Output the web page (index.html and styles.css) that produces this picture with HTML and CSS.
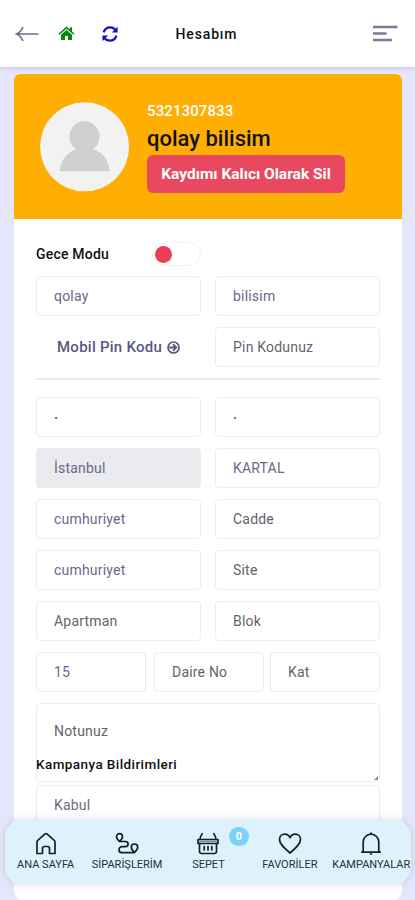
FILE: index.html
```html
<!DOCTYPE html>
<html lang="tr">
<head>
<meta charset="utf-8">
<title>Hesabım</title>
<link rel="stylesheet" href="styles.css">
</head>
<body>
<header class="topbar">
  <div class="tools">
    <svg class="back" width="24" height="16" viewBox="0 0 24 16"><path d="M8 1Q6 6 1.5 8Q6 10 8 15M2 8H23.5" fill="none" stroke="#6f6c8b" stroke-width="1.6"/></svg>
    <svg class="home" width="17" height="15" viewBox="0 0 17 15"><path fill="#0a850d" d="M8.5 .6 11.8 3.5V1.2H14V5.5L16.6 7.7 15.6 8.8 8.5 2.7 1.4 8.8 .4 7.7ZM8.5 4 14 8.7V13.4Q14 14 13.4 14H10V10H7V14H3.6Q3 14 3 13.4V8.7Z"/></svg>
    <svg class="sync" width="16" height="16" viewBox="0 0 16 16"><path d="M1.6 6.4C2.8 2.7 5.4 1.3 8.3 1.3 10.2 1.3 11.8 2 13.2 3.4M14.4 9.6C13.2 13.3 10.6 14.7 7.7 14.7 5.8 14.7 4.2 14 2.8 12.6" fill="none" stroke="#1212c4" stroke-width="2.2"/><path d="M15.6 .8V6.5H9.9ZM.4 15.2V9.5H6.1Z" fill="#1212c4"/></svg>
  </div>
  <h1 class="title">Hesabım</h1>
  <svg class="menu" width="25" height="17" viewBox="0 0 25 17"><path d="M0 2H24.5M0 8.5H13.5M0 15H19" stroke="#7d7a97" stroke-width="2.4"/></svg>
</header>
<main class="card">
  <section class="profile">
    <svg class="avatar" width="90" height="90" viewBox="0 0 90 90"><circle cx="44.6" cy="44.8" r="44.5" fill="#f2f2f2"/><path d="M20 69.3C20.5 58 27 50 37 47V42H52.5V47C63 50 69 58 69.5 69.3Z" fill="#ced0d1"/><ellipse cx="44.5" cy="34.5" rx="15" ry="15.2" fill="#ced0d1"/></svg>
    <div class="who">
      <div class="phone">5321307833</div>
      <h2 class="name">qolay bilisim</h2>
      <button class="delete">Kaydımı Kalıcı Olarak Sil</button>
    </div>
  </section>
  <section class="form">
    <div class="mode"><span>Gece Modu</span><i class="switch"></i></div>
    <div class="row"><div class="field">qolay</div><div class="field">bilisim</div></div>
    <div class="row">
      <div class="pin"><span>Mobil Pin Kodu</span><svg width="13" height="13" viewBox="0 0 13 13"><path d="M6.5 1A5.5 5.5 0 1 1 6.5 12A5.5 5.5 0 1 1 6.5 1Z" fill="none" stroke="#5a577f" stroke-width="1.7"/><path d="M2 6.5H9M6 3.2 9.3 6.5 6 9.8" fill="none" stroke="#5a577f" stroke-width="1.8"/></svg></div>
      <div class="field hint">Pin Kodunuz</div>
    </div>
    <hr>
    <div class="row"><div class="field dot">.</div><div class="field dot">.</div></div>
    <div class="row"><div class="field locked">İstanbul</div><div class="field">KARTAL</div></div>
    <div class="row"><div class="field">cumhuriyet</div><div class="field hint">Cadde</div></div>
    <div class="row"><div class="field">cumhuriyet</div><div class="field hint">Site</div></div>
    <div class="row"><div class="field hint">Apartman</div><div class="field hint">Blok</div></div>
    <div class="row thirds"><div class="field">15</div><div class="field hint">Daire No</div><div class="field hint">Kat</div></div>
    <div class="notes"><span class="hint">Notunuz</span><strong>Kampanya Bildirimleri</strong><i class="grip"></i></div>
    <div class="field consent">Kabul</div>
  </section>
</main>
<nav class="dock">
  <a class="item"><svg width="22" height="24" viewBox="0 0 22 24"><path d="M2 10Q2 9 3 8.2L9.8 2.2Q11 1.2 12.2 2.2L19 8.2Q20 9 20 10V21.5H14.5V16.5Q14.5 14.5 12.5 14.5H9.5Q7.5 14.5 7.5 16.5V21.5H2Z"/></svg><span>ANA SAYFA</span></a>
  <a class="item"><svg width="24" height="24" viewBox="0 0 24 24"><path d="M4.5 9.5C2.5 7.5 1.5 6.2 1.5 4.7A3 3 0 0 1 7.5 4.7C7.5 6.2 6.5 7.5 4.5 9.5ZM19.5 20.5C17.3 18.3 16.3 17 16.3 15.2A3.2 3.2 0 0 1 22.7 15.2C22.7 17 21.7 18.3 19.5 20.5ZM4.5 9.5H10.5A2.6 2.6 0 0 1 10.5 14.7H7A3 3 0 0 0 7 20.7H19.5"/></svg><span>SİPARİŞLERİM</span></a>
  <a class="item"><svg width="24" height="24" viewBox="0 0 24 24"><path d="M2 7.5H22V11.5H2ZM3.5 11.5V19.5Q3.7 21.5 5.7 21.5H18.3Q20.3 21.5 20.5 19.5V11.5M4 7.5Q4.2 4 6.2 1.7M20 7.5Q19.8 4 17.8 1.7M8.2 14.5V18M12 14.5V18M15.8 14.5V18"/><path class="rim" d="M3 9.5H21"/></svg><span>SEPET</span><b class="badge">0</b></a>
  <a class="item"><svg width="24" height="24" viewBox="0 0 24 24"><path d="M12 21C5 15 1.5 11.5 1.5 7.5 1.5 4.3 3.8 2.2 6.7 2.2 9 2.2 11 3.5 12 5.7 13 3.5 15 2.2 17.3 2.2 20.2 2.2 22.5 4.3 22.5 7.5 22.5 11.5 19 15 12 21Z"/></svg><span>FAVORİLER</span></a>
  <a class="item"><svg width="22" height="24" viewBox="0 0 22 24"><path d="M3.2 20V10A7.8 7.8 0 0 1 18.8 10V20M1.8 20.2H20.2M10.5 22H11.5M11 1V2.2"/></svg><span>KAMPANYALAR</span></a>
</nav>
</body>
</html>
```
FILE: styles.css
```css
* { box-sizing: border-box; }
body { margin: 0; height: 900px; overflow: hidden; background: #e5e6fb; font-family: Roboto, "Liberation Sans", sans-serif; color: #111; }
.topbar { position: relative; height: 67px; padding: 0 17px 0 15px; display: grid; grid-template-columns: 1fr auto 1fr; align-items: center; background: #fff; box-shadow: 0 1px 4px rgba(90, 90, 140, .25); }
.tools { display: flex; align-items: center; }
.home { margin-left: 19px; }
.sync { margin-left: 27px; }
.title { margin: 0; font-size: 14px; font-weight: 500; letter-spacing: .85px; }
.menu { justify-self: end; }
.card { width: 388px; height: 828px; margin: 7px 0 0 14px; border-radius: 6px 6px 12px 12px; background: #fff; overflow: hidden; }
.profile { display: flex; height: 145px; padding: 28px 26px; background: #ffae03; }
.avatar { flex: none; }
.who { margin-left: 17px; }
.phone { color: #fff; font-size: 15px; line-height: 19px; font-weight: 500; letter-spacing: .1px; }
.name { margin: 4px 0 2px; font-size: 22px; line-height: 28px; font-weight: 500; letter-spacing: 0; }
.delete { display: block; width: 198px; height: 38px; padding: 0; border: 0; border-radius: 6px; background: #e9495f; color: #fff; font: 700 15.5px Roboto, sans-serif; white-space: nowrap; }
.form { padding: 22px 22px 0; }
.mode { display: flex; align-items: center; justify-content: space-between; width: 165px; height: 25px; margin-bottom: 10px; font-size: 14px; font-weight: 500; letter-spacing: .2px; }
.switch { width: 49px; height: 24px; padding: 3px 2px; border: 1px solid #f1f1f3; border-radius: 12px; }
.switch::before { content: ""; display: block; width: 17px; height: 17px; border-radius: 50%; background: #e93d58; }
.row { display: grid; grid-template-columns: 165px 165px; gap: 14px; height: 40px; margin-bottom: 11px; }
.thirds { grid-template-columns: repeat(3, 110px); justify-content: space-between; gap: 0; }
.thirds .field:nth-child(2) { margin: 0 -1px 0 1px; }
.field { height: 40px; padding: 0 17px; border: 1px solid #ededf0; border-radius: 4px; color: #6b6987; font-size: 14px; line-height: 39px; letter-spacing: .2px; }
.hint { color: #62656b; }
.dot { line-height: 32px; font-weight: 700; }
.locked { border-color: #e9ebee; background: #e9ebee; }
.pin { display: flex; align-items: center; justify-content: center; gap: 5px; color: #5a577f; font-size: 15px; font-weight: 500; letter-spacing: .25px; }
hr { height: 2px; margin: 0 0 17px; border: 0; background: #e9e9eb; }
.notes { position: relative; display: flex; flex-direction: column; height: 79px; margin-bottom: 3px; padding-top: 17px; border: 1px solid #ededf0; border-radius: 4px; font-size: 14px; line-height: 20px; letter-spacing: .2px; }
.notes .hint { padding-left: 17px; }
.notes strong { margin: 13px 0 0 -1px; font-size: 13.5px; font-weight: 500; letter-spacing: .42px; }
.grip { position: absolute; right: 1px; bottom: 1px; border: 2px solid; border-color: transparent #888 #888 transparent; }
.dock { position: absolute; left: 5px; top: 819px; width: 406px; height: 66px; display: grid; grid-template-columns: repeat(5, 81.4px); border-radius: 18px; background: #def2fb; box-shadow: 0 0 6px rgba(60, 70, 90, .2); }
.item { position: relative; display: flex; flex-direction: column; align-items: center; padding-top: 13px; font-size: 11px; line-height: 14px; color: #25313a; white-space: nowrap; }
.item svg { flex: none; margin-bottom: 2px; fill: none; stroke: #14202a; stroke-width: 1.7; stroke-linejoin: round; stroke-linecap: round; }
.item .rim { stroke: #84939b; stroke-width: 2; stroke-linecap: butt; }
.badge { position: absolute; left: 61px; top: 8px; width: 20px; height: 19px; border-radius: 10px; background: #7bd2fb; color: #fff; line-height: 19px; text-align: center; }
```
